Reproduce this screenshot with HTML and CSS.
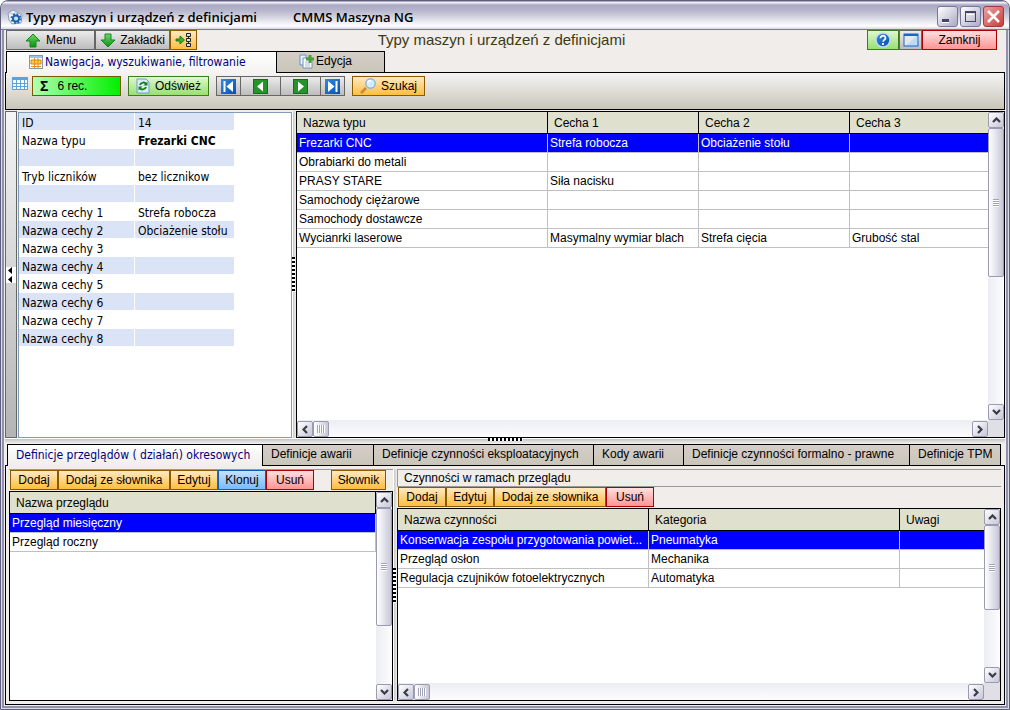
FILE: index.html
```html
<!DOCTYPE html>
<html lang="pl">
<head>
    <meta charset="UTF-8">
    <meta name="viewport" content="width=device-width, initial-scale=1.0">
    <title>Typy maszyn i urządzeń z definicjami</title>
    <link rel="stylesheet" href="styles.css">
</head>
<body>
    <!-- Ikony używane wielokrotnie -->
    <svg class="sprite" aria-hidden="true">
        <defs>
            <linearGradient id="green" x1="0" y1="0" x2="0" y2="1"><stop offset="0" stop-color="#6fd86a"/><stop offset="1" stop-color="#0d8f12"/></linearGradient>
            <linearGradient id="blue" x1="0" y1="0" x2="1" y2="1"><stop offset="0" stop-color="#2f8be6"/><stop offset="1" stop-color="#0a4fa8"/></linearGradient>
        </defs>
        <symbol id="chev-up" viewBox="0 0 9 6"><path d="M1 5l3.500-3.500L8 5" fill="none" stroke="#3a3a48" stroke-width="2.200"/></symbol>
        <symbol id="chev-down" viewBox="0 0 9 6"><path d="M1 1l3.500 3.500L8 1" fill="none" stroke="#3a3a48" stroke-width="2.200"/></symbol>
        <symbol id="chev-left" viewBox="0 0 6 9"><path d="M5 1L1.500 4.500 5 8" fill="none" stroke="#3a3a48" stroke-width="2.200"/></symbol>
        <symbol id="chev-right" viewBox="0 0 6 9"><path d="M1 1l3.500 3.500L1 8" fill="none" stroke="#3a3a48" stroke-width="2.200"/></symbol>
    </svg>

    <div class="window">
        <header class="titlebar">
            <svg class="app-icon" width="16" height="16" viewBox="0 0 16 16"><path d="M1 4l5-3 4 2 5 3-1 8-9 1-3-4z" fill="#eef2f8" stroke="#8d9bb0"/><path d="M2 4l5 1 3-2" stroke="#b9c4d4" fill="none"/><circle cx="9" cy="9.500" r="3" fill="none" stroke="#1b62ac" stroke-width="2"/><circle cx="9" cy="9.500" r="4.500" fill="none" stroke="#1b62ac" stroke-width="1.800" stroke-dasharray="1.770 1.765"/><circle cx="9" cy="9.500" r="1.500" fill="#bfe0fa"/></svg>
            <h1>Typy maszyn i urządzeń z definicjami</h1>
            <span class="app-name">CMMS Maszyna NG</span>
            <div class="window-buttons">
                <button class="win-btn" aria-label="Minimalizuj"><svg width="19" height="19" viewBox="0 0 19 19"><path d="M4 14h7" stroke="#fff" stroke-width="4"/><path d="M4 13.500h7" stroke="#44446a" stroke-width="3"/></svg></button>
                <button class="win-btn" aria-label="Maksymalizuj"><svg width="19" height="19" viewBox="0 0 19 19"><rect x="4.500" y="5.500" width="10" height="9" fill="none" stroke="#44446a"/><path d="M4 5h11" stroke="#44446a" stroke-width="2"/><path d="M6 7.500h7" stroke="#fff"/></svg></button>
                <button class="win-btn win-close" aria-label="Zamknij okno"><svg width="19" height="19" viewBox="0 0 19 19"><path d="M4 4l11 11M15 4L4 15" stroke="#fff" stroke-width="2.600"/></svg></button>
            </div>
        </header>

        <div class="menubar">
            <div class="group">
                <button class="btn gray menu-btn"><svg width="16" height="15" viewBox="0 0 16 15"><path d="M8 1l7 7h-4v6H5V8H1z" fill="url(#green)" stroke="#128a18"/></svg>Menu</button>
                <button class="btn gray tabs-btn"><svg width="16" height="15" viewBox="0 0 16 15"><path d="M8 14l7-7h-4V1H5v6H1z" fill="url(#green)" stroke="#128a18"/></svg>Zakładki</button>
                <button class="btn orange tree-btn" aria-label="Panel"><svg width="17" height="16" viewBox="0 0 17 16"><path d="M1 7h4V4l4.500 4L5 12V9H1z" fill="#3cae35" stroke="#167a14"/><path d="M13.500 1v14" stroke="#222"/><path d="M11.500 1.500h4v3h-4zM11.500 6.500h4v3h-4zM11.500 11.500h4v3h-4z" fill="#ddd" stroke="#222"/></svg></button>
            </div>
            <h2>Typy maszyn i urządzeń z definicjami</h2>
            <div class="group right">
                <button class="btn green help-btn" aria-label="Pomoc"><svg width="16" height="16" viewBox="0 0 16 16"><circle cx="8" cy="8" r="7" fill="url(#blue)" stroke="#c3d8f5" stroke-width="1.500"/><path d="M5.500 6.200c0-3.400 5.200-3.200 5 0-.1 1.600-2.300 1.700-2.400 3.400M8 11v2" fill="none" stroke="#fff" stroke-width="1.800"/></svg></button>
                <button class="btn gray full-btn" aria-label="Okno"><svg width="16" height="14" viewBox="0 0 16 14"><rect x="1" y="1" width="14" height="12" fill="#e8e8e8"/><path d="M15 2v11H2z" fill="#b9dcfa"/><rect x="1" y="1" width="14" height="12" fill="none" stroke="#1468c4"/><path d="M1 2h14" stroke="#1468c4" stroke-width="2"/></svg></button>
                <button class="btn red close-btn">Zamknij</button>
            </div>
        </div>

        <div class="tabs top-tabs" role="tablist">
            <button class="tab active" role="tab" aria-selected="true"><svg width="14" height="14" viewBox="0 0 14 14"><rect x=".5" y=".5" width="13" height="13" fill="#fff" stroke="#8796a8"/><path d="M1 2h12" stroke="#9fc4e8" stroke-width="2"/><path d="M2 5h10v4H2z" fill="#ffd23c" stroke="#d98000"/><path d="M5.500 3v10M9 3v10M2 11.500h10" stroke="#e09028"/></svg>Nawigacja, wyszukiwanie, filtrowanie</button>
            <button class="tab" role="tab" aria-selected="false"><svg width="15" height="15" viewBox="0 0 15 15"><path d="M1 1h6v10H1z" fill="#eaf2fb" stroke="#6c92bd"/><path d="M4 4h6l3 3v7H4z" fill="#fff" stroke="#6c92bd"/><path d="M6 8h3M6 10h5M6 12h5" stroke="#9fbcdc"/><path d="M11 1v8M7 5h8" stroke="#4c9c3c" stroke-width="3"/></svg>Edycja</button>
        </div>

        <div class="toolbar">
            <svg class="grid-icon" width="16" height="14" viewBox="0 0 16 14"><rect x=".5" y=".5" width="15" height="12" fill="#fff" stroke="#5ba3e0"/><path d="M0 1.500h16" stroke="#5ba3e0" stroke-width="3"/><path d="M4.500 1v12M8.500 1v12M12.500 1v12M0 6.500h16M0 9.500h16" stroke="#5ba3e0"/></svg>
            <output class="counter"><b>Σ</b> 6 rec.</output>
            <button class="btn green refresh-btn"><svg width="14" height="16" viewBox="0 0 14 16"><path d="M1 1h9l3 3v11H1z" fill="#dcecf9" stroke="#6a9ccb"/><path d="M4 7c1-3 5-3 6-1M10 9c-1 3-5 3-6 1" fill="none" stroke="#17801c" stroke-width="2"/><path d="M11.500 3.500v4h-4zM2.500 12.500v-4h4z" fill="#17801c"/></svg>Odśwież</button>
            <div class="group nav-group">
                <button class="btn gray nav-edge" aria-label="Pierwszy"><svg width="15" height="15" viewBox="0 0 15 15"><rect width="15" height="15" fill="url(#blue)"/><path d="M3.500 2v11" stroke="#fff" stroke-width="2"/><path d="M12 2v11L5.500 7.500z" fill="#fff"/></svg></button>
                <button class="btn gray nav-step" aria-label="Poprzedni"><svg width="15" height="15" viewBox="0 0 15 15"><rect x=".5" y=".5" width="14" height="14" fill="#23932a" stroke="#117018"/><path d="M10 2.500v10L4 7.500z" fill="#fff"/></svg></button>
                <button class="btn gray nav-step" aria-label="Następny"><svg width="15" height="15" viewBox="0 0 15 15"><rect x=".5" y=".5" width="14" height="14" fill="#23932a" stroke="#117018"/><path d="M5 2.500v10l6-5z" fill="#fff"/></svg></button>
                <button class="btn gray nav-edge" aria-label="Ostatni"><svg width="15" height="15" viewBox="0 0 15 15"><rect width="15" height="15" fill="url(#blue)"/><path d="M11.500 2v11" stroke="#fff" stroke-width="2"/><path d="M3 2v11l6.500-5.500z" fill="#fff"/></svg></button>
            </div>
            <button class="btn orange search-btn"><svg width="17" height="16" viewBox="0 0 17 16"><path d="M6 10l-5 5" stroke="#c98a3c" stroke-width="2.600"/><circle cx="10.500" cy="5.500" r="4.700" fill="#d3efff" stroke="#86b4da" stroke-width="1.400"/><path d="M8 5c0-2 2-2.500 3-2.500" stroke="#fff" fill="none" stroke-width="1.500"/></svg>Szukaj</button>
        </div>

        <main class="upper">
            <button class="collapse" aria-label="Zwiń panel"><svg width="10" height="16" viewBox="0 0 10 16"><path d="M0 0h10v16H0z" fill="#fff"/><path d="M6 0v7L2 3.500zM6 9v7L2 12.500z" fill="#000"/></svg></button>
            <section class="details">
                <table>
                    <tr><th>ID</th><td>14</td></tr>
                    <tr><th>Nazwa typu</th><td><b>Frezarki CNC</b></td></tr>
                    <tr><th></th><td></td></tr>
                    <tr><th>Tryb liczników</th><td>bez licznikow</td></tr>
                    <tr><th></th><td></td></tr>
                    <tr><th>Nazwa cechy 1</th><td>Strefa robocza</td></tr>
                    <tr><th>Nazwa cechy 2</th><td>Obciażenie stołu</td></tr>
                    <tr><th>Nazwa cechy 3</th><td></td></tr>
                    <tr><th>Nazwa cechy 4</th><td></td></tr>
                    <tr><th>Nazwa cechy 5</th><td></td></tr>
                    <tr><th>Nazwa cechy 6</th><td></td></tr>
                    <tr><th>Nazwa cechy 7</th><td></td></tr>
                    <tr><th>Nazwa cechy 8</th><td></td></tr>
                </table>
            </section>
            <div class="splitter-v"><span class="grip"></span></div>
            <section class="grid">
                <div class="grid-body">
                    <table>
                        <colgroup><col class="c-wide"><col class="c-mid"><col class="c-mid"><col></colgroup>
                        <thead><tr><th>Nazwa typu</th><th>Cecha 1</th><th>Cecha 2</th><th>Cecha 3</th></tr></thead>
                        <tbody>
                            <tr class="selected"><td>Frezarki CNC</td><td>Strefa robocza</td><td>Obciażenie stołu</td><td></td></tr>
                            <tr><td>Obrabiarki do metali</td><td></td><td></td><td></td></tr>
                            <tr><td>PRASY STARE</td><td>Siła nacisku</td><td></td><td></td></tr>
                            <tr><td>Samochody ciężarowe</td><td></td><td></td><td></td></tr>
                            <tr><td>Samochody dostawcze</td><td></td><td></td><td></td></tr>
                            <tr><td>Wycianrki laserowe</td><td>Masymalny wymiar blach</td><td>Strefa cięcia</td><td>Grubość stal</td></tr>
                        </tbody>
                    </table>
                </div>
                <div class="scroll-v">
                    <button aria-label="W górę"><svg width="9" height="6"><use href="#chev-up"/></svg></button>
                    <div class="track"><div class="thumb thumb-types"></div></div>
                    <button aria-label="W dół"><svg width="9" height="6"><use href="#chev-down"/></svg></button>
                </div>
                <div class="scroll-h">
                    <button aria-label="W lewo"><svg width="6" height="9"><use href="#chev-left"/></svg></button>
                    <div class="track"><div class="thumb"></div></div>
                    <button aria-label="W prawo"><svg width="6" height="9"><use href="#chev-right"/></svg></button>
                </div>
            </section>
        </main>

        <div class="splitter-h"><span class="grip"></span></div>

        <div class="tabs bottom-tabs" role="tablist">
            <button class="tab active" role="tab" aria-selected="true">Definicje przeglądów ( działań) okresowych</button>
            <button class="tab w-111" role="tab">Definicje awarii</button>
            <button class="tab w-220" role="tab">Definicje czynności eksploatacyjnych</button>
            <button class="tab w-90" role="tab">Kody awarii</button>
            <button class="tab w-226" role="tab">Definicje czynności formalno - prawne</button>
            <button class="tab w-91" role="tab">Definicje TPM</button>
        </div>

        <div class="lower">
            <section class="pane reviews">
                <div class="actions">
                    <button class="btn orange">Dodaj</button>
                    <button class="btn orange wide">Dodaj ze słownika</button>
                    <button class="btn orange">Edytuj</button>
                    <button class="btn blue">Klonuj</button>
                    <button class="btn red">Usuń</button>
                    <button class="btn orange dict-btn">Słownik</button>
                </div>
                <div class="grid no-hscroll">
                    <div class="grid-body">
                        <table>
                            <thead><tr><th>Nazwa przeglądu</th></tr></thead>
                            <tbody>
                                <tr class="selected"><td>Przegląd miesięczny</td></tr>
                                <tr><td>Przegląd roczny</td></tr>
                            </tbody>
                        </table>
                    </div>
                    <div class="scroll-v">
                        <button aria-label="W górę"><svg width="9" height="6"><use href="#chev-up"/></svg></button>
                        <div class="track"><div class="thumb thumb-reviews"></div></div>
                        <button aria-label="W dół"><svg width="9" height="6"><use href="#chev-down"/></svg></button>
                    </div>
                </div>
            </section>
            <div class="splitter-v"><span class="grip"></span></div>
            <section class="pane tasks">
                <h3>Czynności w ramach przeglądu</h3>
                <div class="actions">
                    <button class="btn orange">Dodaj</button>
                    <button class="btn orange">Edytuj</button>
                    <button class="btn orange wide">Dodaj ze słownika</button>
                    <button class="btn red">Usuń</button>
                </div>
                <div class="grid">
                    <div class="grid-body">
                        <table>
                            <colgroup><col class="c-wide"><col class="c-wide"><col></colgroup>
                            <thead><tr><th>Nazwa czynności</th><th>Kategoria</th><th>Uwagi</th></tr></thead>
                            <tbody>
                                <tr class="selected"><td>Konserwacja zespołu przygotowania powiet...</td><td>Pneumatyka</td><td></td></tr>
                                <tr><td>Przegląd osłon</td><td>Mechanika</td><td></td></tr>
                                <tr><td>Regulacja czujników fotoelektrycznych</td><td>Automatyka</td><td></td></tr>
                            </tbody>
                        </table>
                    </div>
                    <div class="scroll-v">
                        <button aria-label="W górę"><svg width="9" height="6"><use href="#chev-up"/></svg></button>
                        <div class="track"><div class="thumb thumb-tasks"></div></div>
                        <button aria-label="W dół"><svg width="9" height="6"><use href="#chev-down"/></svg></button>
                    </div>
                    <div class="scroll-h">
                        <button aria-label="W lewo"><svg width="6" height="9"><use href="#chev-left"/></svg></button>
                        <div class="track"><div class="thumb"></div></div>
                        <button aria-label="W prawo"><svg width="6" height="9"><use href="#chev-right"/></svg></button>
                    </div>
                </div>
            </section>
        </div>
    </div>
</body>
</html>
```
FILE: styles.css
```css
* {
    box-sizing: border-box;
}
body {
    margin: 0;
    background-color: #fff;
    font-family: "Liberation Sans", Arial, sans-serif;
    font-size: 12px;
    color: #000;
}
button {
    margin: 0;
    padding: 0;
    font: inherit;
    color: inherit;
    cursor: pointer;
}
h1, h2, h3 {
    margin: 0;
    font-weight: normal;
}
svg {
    flex: none;
    display: block;
}
/* nie display: none, bo gradienty przestają działać */
.sprite {
    position: absolute;
    width: 0;
    height: 0;
}

/* Okno */
.window {
    display: flex;
    flex-direction: column;
    height: 100vh;
    border: 1px solid #5f5f7c;
    border-radius: 8px 8px 0 0;
    background-color: #f0edea;
    box-shadow: inset 0 0 0 1px #dcdce8, inset 0 0 0 3px #8f8fae;
    padding: 0 4px 4px;
    overflow: hidden;
}
.titlebar {
    flex: none;
    display: flex;
    align-items: center;
    height: 29px;
    margin: 0 -4px;
    padding: 2px 5px 0 6px;
    border-top: 1px solid #a8a8c0;
    border-bottom: 1px solid #77779a;
    background: linear-gradient(#fff 0, #a9a9c4 3px, #b4b4cb 8px, #d3d3e0 15px, #fff 24px, #c8c8d8 28px);
    font-family: "Open Sans", "Trebuchet MS", sans-serif;
    font-size: 13px;
    font-weight: 600;
}
.titlebar h1 {
    margin-left: 3px;
    font-size: 13px;
    font-weight: 600;
}
.app-name {
    margin-left: 36px;
}
.window-buttons {
    display: flex;
    gap: 2px;
    margin-left: auto;
}
.win-btn {
    width: 21px;
    height: 21px;
    border: 1px solid #77779a;
    border-radius: 3px;
    background: linear-gradient(135deg, #fff, #a9a9c4);
}
.win-close {
    border-color: #a3383a;
    background: linear-gradient(135deg, #f0a0a0, #c83c3c);
}

/* Przyciski */
.btn {
    flex: none;
    display: flex;
    align-items: center;
    justify-content: center;
    height: 20px;
    border: 1px solid #666;
    white-space: nowrap;
}
.gray {
    background: linear-gradient(#ebebeb, #bdbdbd);
}
.orange {
    border-color: #8a5a00;
    background: linear-gradient(#ffe9c4, #ffbe3e);
}
.green {
    border-color: #3f7a22;
    background: linear-gradient(#def8d0, #98e070);
}
.blue {
    border-color: #0f5fb0;
    background: linear-gradient(#c6e2ff, #78baff);
}
.red {
    border-color: #a80000;
    background: linear-gradient(#ffe0e0, #ff9494);
}
.group {
    display: flex;
}

/* Pasek menu */
.menubar {
    flex: none;
    display: grid;
    grid-template-columns: 1fr auto 1fr;
    padding: 0 8px 0 1px;
    height: 21px;
}
.menubar h2 {
    font-size: 15px;
    line-height: 20px;
    color: #3a3a14;
}
.right {
    justify-content: flex-end;
}
.menu-btn {
    width: 89px;
    gap: 5px;
}
.tabs-btn {
    width: 75px;
    gap: 4px;
}
.tree-btn {
    width: 27px;
}
.help-btn {
    width: 32px;
}
.full-btn {
    width: 23px;
}
.close-btn {
    width: 75px;
}

/* Zakładki */
.tabs {
    flex: none;
    display: flex;
    height: 21px;
}
.tab {
    display: flex;
    align-items: center;
    height: 21px;
    padding: 0 0 2px 8px;
    border: 1px solid #000;
    border-width: 1px 1px 0 0;
    background: linear-gradient(#d5cdc8, #c9c6b9);
    white-space: nowrap;
}
/* aktywna zakładka przykrywa krawędź panelu pod spodem */
.tab.active {
    position: relative;
    z-index: 1;
    height: 22px;
    border-left-width: 1px;
    background: linear-gradient(#fff, #f4f3f1);
    font-family: "DejaVu Sans Condensed", Tahoma, sans-serif;
    color: #00007c;
}
.top-tabs {
    padding-left: 1px;
}
.top-tabs .tab {
    width: 108px;
    padding-left: 22px;
    gap: 2px;
}
.top-tabs .active {
    width: 271px;
}
.bottom-tabs {
    padding-left: 2px;
}
.bottom-tabs .active {
    width: 256px;
    background: linear-gradient(#fff, #f0edea);
}
.w-90 { width: 90px; }
.w-91 { width: 91px; }
.w-111 { width: 111px; }
.w-220 { width: 220px; }
.w-226 { width: 226px; }

/* Pasek narzędzi */
.toolbar {
    flex: none;
    display: flex;
    align-items: flex-start;
    height: 38px;
    padding: 3px 6px;
    border: 1px solid #000;
    background: linear-gradient(#f5f4f3, #c9c5b9);
}
.grid-icon {
    margin-top: 1px;
}
.counter {
    display: flex;
    align-items: center;
    width: 89px;
    height: 20px;
    margin: 0 7px 0 4px;
    padding-left: 7px;
    gap: 9px;
    border: 1px solid #7a5a00;
    background: linear-gradient(90deg, #b0ffb0, #00f000);
}
.counter b {
    font-size: 14px;
}
.refresh-btn {
    width: 81px;
    gap: 5px;
}
.nav-group {
    margin: 0 7px;
}
.nav-edge {
    width: 25px;
}
.nav-step {
    width: 40px;
    border-left: 0;
}
.nav-edge:last-child {
    width: 24px;
    border-left: 0;
}
.search-btn {
    width: 73px;
    gap: 4px;
}

/* Górna część: szczegóły i lista typów */
.upper {
    flex: 327 1 0;
    display: flex;
    min-height: 0;
    margin-top: 1px;
}
.collapse {
    display: flex;
    align-items: center;
    flex: none;
    width: 12px;
    border: 1px solid #666;
    background: linear-gradient(#f5f5f5, #b4b4b4);
}
.details {
    flex: none;
    width: 274px;
    margin: 1px 0 0 1px;
    border: 1px solid #7f9db9;
    background-color: #fff;
    font-family: "DejaVu Sans Condensed", Tahoma, sans-serif;
    overflow: hidden;
}
.details table {
    border-spacing: 0;
    table-layout: fixed;
    width: 215px;
}
.details th, .details td {
    height: 18px;
    padding: 3px 0 0 3px;
    line-height: 14px;
    text-align: left;
    font-weight: normal;
    white-space: nowrap;
    border-bottom: 1px solid #fff;
}
.details th {
    width: 116px;
    border-right: 1px solid #fff;
}
.details tr:nth-child(odd) {
    background-color: #dbe4f6;
}
.splitter-v {
    flex: none;
    display: flex;
    align-items: center;
    width: 4px;
    background: linear-gradient(90deg, #fff 1px, #c8c8c8 1px, #f0edea);
}
.splitter-v .grip {
    width: 3px;
    height: 35px;
    background: repeating-linear-gradient(#000 0 2px, #fff 2px 4px);
}
.splitter-h {
    flex: none;
    display: flex;
    justify-content: center;
    height: 6px;
    background: linear-gradient(#fff 1px, #c4c4c4 1px, #f4f4f4);
}
.splitter-h .grip {
    width: 35px;
    height: 3px;
    background: repeating-linear-gradient(90deg, #000 0 2px, #fff 2px 4px);
}

/* Siatka danych z paskami przewijania */
.grid {
    flex: 1;
    display: grid;
    grid-template: minmax(0, 1fr) 17px / minmax(0, 1fr) 16px;
    min-width: 0;
    min-height: 0;
    border: 1px solid #000;
    background-color: #e0dfe6;
}
.grid.no-hscroll {
    grid-template-rows: minmax(0, 1fr);
}
.grid-body {
    background-color: #fff;
    overflow: hidden;
}
.grid-body table {
    width: 100%;
    table-layout: fixed;
    border-spacing: 0;
}
.c-wide {
    width: 251px;
}
.c-mid {
    width: 151px;
}
.grid-body th {
    height: 22px;
    padding: 0 0 0 6px;
    border-right: 1px solid #000;
    border-bottom: 1px solid #000;
    background-color: #e0e0ce;
    text-align: left;
    font-weight: normal;
}
.grid-body td {
    height: 19px;
    padding: 0 0 0 2px;
    border-right: 1px solid #c0c0c0;
    border-bottom: 1px solid #c0c0c0;
    white-space: nowrap;
}
.grid-body th:last-child:not(:first-child),
.grid-body td:last-child:not(:first-child) {
    border-right: 0;
}
.selected td {
    background-color: #0000ff;
    color: #fff;
}
.scroll-v, .scroll-h {
    display: flex;
    background: linear-gradient(90deg, #ecedf2, #fdfdff);
}
.scroll-v {
    flex-direction: column;
}
.scroll-h {
    align-items: flex-end;
    background: linear-gradient(#ecedf2, #fdfdff);
}
.scroll-v button, .scroll-h button {
    display: flex;
    align-items: center;
    justify-content: center;
    flex: none;
    width: 16px;
    height: 16px;
    border: 1px solid #9a9ab0;
    border-radius: 2px;
    background: linear-gradient(135deg, #fff, #c6c6d8);
}
.track {
    flex: 1;
    min-height: 0;
}
.thumb {
    display: flex;
    align-items: center;
    justify-content: center;
    width: 16px;
    height: 16px;
    border: 1px solid #9a9ab0;
    border-radius: 2px;
    background: linear-gradient(90deg, #fff, #c6c6d8);
}
.thumb::before {
    content: "";
    width: 8px;
    height: 8px;
    background: repeating-linear-gradient(90deg, #a4a4b8 0 1px, #fff 1px 2px);
}
.scroll-v .thumb::before {
    width: 6px;
    background: repeating-linear-gradient(#a4a4b8 0 1px, #fff 1px 2px);
}
.thumb-types { height: 54%; }
.thumb-reviews { height: 67%; }
.thumb-tasks { height: 60%; }

/* Dolna część: przeglądy i czynności */
.lower {
    flex: 232 1 0;
    display: flex;
    min-height: 0;
    padding: 3px;
    border: 1px solid #000;
    background-color: #f0edea;
}
.pane {
    display: flex;
    flex-direction: column;
    min-width: 0;
}
.reviews {
    flex: none;
    width: 384px;
    border-top: 1px solid #999;
}
.tasks {
    flex: 1;
}
.tasks h3 {
    height: 18px;
    padding-left: 6px;
    border: 1px solid #999;
    border-width: 1px 0 1px 1px;
    font-size: 12px;
    line-height: 16px;
}
.actions {
    flex: none;
    display: flex;
    height: 21px;
    padding-left: 1px;
}
.actions .btn {
    width: 48px;
}
.actions .wide {
    width: 112px;
}
.actions .dict-btn {
    width: 55px;
    margin-left: 17px;
}
```
